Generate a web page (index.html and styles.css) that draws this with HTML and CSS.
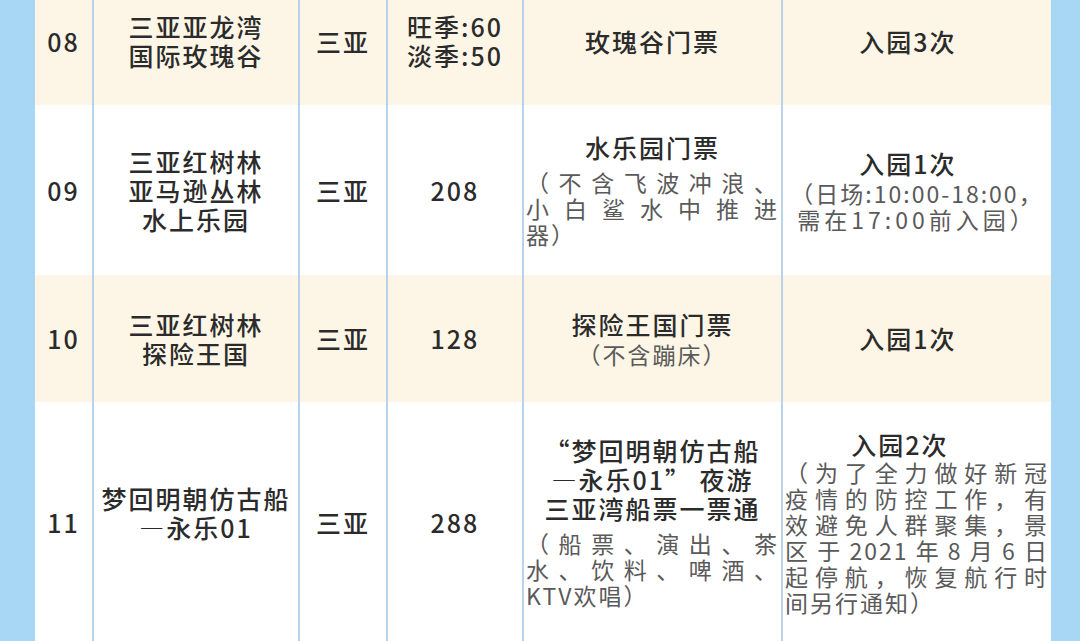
FILE: index.html
```html
<!DOCTYPE html>
<html lang="zh-CN">
<head>
<meta charset="utf-8">
<title>三亚景区门票</title>
<link rel="stylesheet" href="styles.css">
</head>
<body>
<div class="sheet">
  <div class="row cream h08">
    <div class="cell"><p class="t">08</p></div>
    <div class="cell"><p class="t">三亚亚龙湾<br>国际玫瑰谷</p></div>
    <div class="cell"><p class="t">三亚</p></div>
    <div class="cell"><p class="t">旺季:60<br>淡季:50</p></div>
    <div class="cell"><p class="t">玫瑰谷门票</p></div>
    <div class="cell"><p class="t c6">入园3次</p></div>
  </div>
  <div class="row white h09">
    <div class="cell"><p class="t">09</p></div>
    <div class="cell"><p class="t">三亚红树林<br>亚马逊丛林<br>水上乐园</p></div>
    <div class="cell"><p class="t">三亚</p></div>
    <div class="cell"><p class="t">208</p></div>
    <div class="cell">
      <p class="t">水乐园门票</p>
      <div class="note gap"><span class="jl">（不含飞波冲浪、</span><span class="jl">小白鲨水中推进</span><span class="ll">器）</span></div>
    </div>
    <div class="cell">
      <p class="t c6">入园1次</p>
      <div class="note"><span class="cl">（日场:10:00-18:00，</span><span class="cl wide">需在17:00前入园）</span></div>
    </div>
  </div>
  <div class="row cream h10">
    <div class="cell"><p class="t">10</p></div>
    <div class="cell"><p class="t">三亚红树林<br>探险王国</p></div>
    <div class="cell"><p class="t">三亚</p></div>
    <div class="cell"><p class="t">128</p></div>
    <div class="cell">
      <p class="t">探险王国门票</p>
      <div class="note"><span class="cl">（不含蹦床）</span></div>
    </div>
    <div class="cell"><p class="t c6">入园1次</p></div>
  </div>
  <div class="row white h11">
    <div class="cell"><p class="t">11</p></div>
    <div class="cell"><p class="t up">梦回明朝仿古船<br>—永乐01</p></div>
    <div class="cell"><p class="t">三亚</p></div>
    <div class="cell"><p class="t">288</p></div>
    <div class="cell">
      <p class="t">“梦回明朝仿古船<br>—永乐01” 夜游<br>三亚湾船票一票通</p>
      <div class="note gap"><span class="jl">（船票、演出、茶</span><span class="jl">水、饮料、啤酒、</span><span class="ll">KTV欢唱）</span></div>
    </div>
    <div class="cell">
      <p class="t c6 more">入园2次</p>
      <div class="note tight"><span class="jl">（为了全力做好新冠</span><span class="jl">疫情的防控工作，有</span><span class="jl">效避免人群聚集，景</span><span class="jl">区于2021年8月6日</span><span class="jl">起停航，恢复航行时</span><span class="ll">间另行通知）</span></div>
    </div>
  </div>
</div>
</body>
</html>
```

FILE: styles.css
```css
html, body {
  margin: 0;
  padding: 0;
}

body {
  background: #a8d7f6;
  font-family: "Noto Sans CJK SC", "Noto Sans", sans-serif;
  overflow: hidden;
}

.sheet {
  margin: -23px 29px 0 35px;
}

.row {
  display: grid;
  grid-template-columns: 59px 206px 88px 136px 259px 268px;
}

.cream {
  background: #fdf6e6;
}

.white {
  background: #ffffff;
}

.h08 { height: 128px; }
.h09 { height: 170px; }
.h10 { height: 127px; }
.h11 { height: 240px; }

.cell {
  box-sizing: border-box;
  border-right: 2px solid #b9d4ea;
  display: flex;
  flex-direction: column;
  justify-content: center;
  text-align: center;
  padding: 0 2px;
}

.cell:last-child {
  border-right: 0;
}

.t {
  margin: 0;
  font-size: 25px;
  line-height: 29px;
  letter-spacing: 2px;
  font-weight: 500;
  color: #2b2b2b;
}

.c6 {
  padding-right: 18px;
}

.c6.more {
  padding-right: 34px;
}

.up {
  margin-bottom: 18px;
}

.note {
  margin: 2px 0 0;
  font-size: 23px;
  line-height: 26px;
  letter-spacing: 2px;
  color: #5a5a5a;
}

.note.gap {
  margin-top: 7px;
}

.note.tight {
  margin-top: 0;
}

.note span {
  display: block;
}

.jl {
  text-align: justify;
  text-align-last: justify;
}

.ll {
  text-align: left;
}

.cl {
  text-align: center;
}

.wide {
  letter-spacing: 4px;
}
```
